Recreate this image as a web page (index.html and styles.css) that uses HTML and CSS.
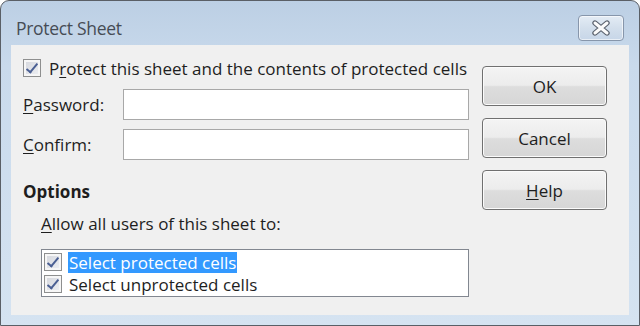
FILE: index.html
```html
<!DOCTYPE html>
<html lang="en">
<head>
  <meta charset="UTF-8">
  <title>Protect Sheet</title>
  <link rel="stylesheet" href="styles.css">
</head>
<body>

  <div class="window">
    <div class="titlebar">
      <span class="title">Protect Sheet</span>
      <button class="close-btn" aria-label="Close">
        <svg width="22" height="16" viewBox="0 0 22 16">
          <path d="M5 3 L17 13 M17 3 L5 13" stroke="#5d6470" stroke-width="5.4" stroke-linecap="round"/>
          <path d="M5 3 L17 13 M17 3 L5 13" stroke="#fbfbfb" stroke-width="3" stroke-linecap="round"/>
        </svg>
      </button>
    </div>

    <div class="client">
      <div class="main">
        <label class="check-row">
          <span class="checkbox checked"></span>
          <span>P<u>r</u>otect this sheet and the contents of protected cells</span>
        </label>

        <div class="field-row">
          <label for="password"><u>P</u>assword:</label>
          <input type="password" id="password">
        </div>
        <div class="field-row">
          <label for="confirm"><u>C</u>onfirm:</label>
          <input type="password" id="confirm">
        </div>

        <h3 class="options">Options</h3>
        <p class="allow"><u>A</u>llow all users of this sheet to:</p>

        <div class="listbox">
          <div class="list-item">
            <span class="checkbox checked"></span>
            <span class="item-text selected">Select protected cells</span>
          </div>
          <div class="list-item">
            <span class="checkbox checked"></span>
            <span class="item-text">Select unprotected cells</span>
          </div>
        </div>
      </div>

      <div class="buttons">
        <button class="dlg-btn">OK</button>
        <button class="dlg-btn">Cancel</button>
        <button class="dlg-btn"><u>H</u>elp</button>
      </div>
    </div>
  </div>

</body>
</html>
```

FILE: styles.css
```css
body {
  margin: 0;
  padding: 0;
  background: #ffffff;
  font-family: "Open Sans", "Noto Sans", sans-serif;
  font-size: 17px;
  color: #1e1e1e;
}
u {
  text-decoration-thickness: 1px;
  text-underline-offset: 2px;
}

.window {
  width: 640px;
  height: 326px;
  box-sizing: border-box;
  border: 1px solid #5a5f66;
  border-radius: 9px 9px 0 0;
  background: linear-gradient(180deg, #bccfe4 0%, #c9daec 20%, #d5e3f1 100%);
  display: flex;
  flex-direction: column;
  overflow: hidden;
}

.titlebar {
  height: 44px;
  display: flex;
  align-items: flex-start;
  justify-content: space-between;
  padding: 0 15px 0 15px;
}
.title {
  margin-top: 15px;
  font-family: "Open Sans", sans-serif;
  font-size: 17.5px;
  letter-spacing: -0.3px;
  color: #464c55;
}
.close-btn {
  margin-top: 14px;
  width: 46px;
  height: 26px;
  padding: 0;
  border: 1px solid #8796ab;
  border-radius: 4px;
  background: linear-gradient(180deg, #e4ecf5 0%, #d3dfec 50%, #c7d6e8 100%);
  box-shadow: inset 0 0 0 1px rgba(255,255,255,0.6);
  display: flex;
  align-items: center;
  justify-content: center;
}

.client {
  flex: 1;
  margin: 0 10px 10px 10px;
  background: #f0f0f0;
  display: flex;
  padding: 12px 0 0 12px;
}

.main {
  width: 446px;
  display: flex;
  flex-direction: column;
}

.checkbox {
  width: 18px;
  height: 18px;
  box-sizing: border-box;
  border: 1px solid #8e8f8f;
  background: linear-gradient(135deg, #d4d6dc 0%, #eef0f4 100%);
  box-shadow: inset 0 0 0 2px #f6f6f6;
  flex-shrink: 0;
  position: relative;
}
.checkbox.checked::after {
  content: "";
  position: absolute;
  left: 5px;
  top: 1px;
  width: 4px;
  height: 10px;
  border: solid #4a5f93;
  border-width: 0 2px 2px 0;
  transform: rotate(40deg);
}

.check-row {
  display: flex;
  align-items: center;
  gap: 8px;
  height: 22px;
}

.field-row {
  display: flex;
  align-items: center;
  margin-top: 10px;
  height: 31px;
}
.field-row + .field-row {
  margin-top: 9px;
}
.field-row label {
  width: 100px;
}
.field-row input {
  flex: 1;
  height: 31px;
  box-sizing: border-box;
  border: 1px solid #a8a8a8;
  background: #ffffff;
  margin: 0;
}

.options {
  margin: 22px 0 0 0;
  font-size: 17px;
  font-weight: bold;
  line-height: 20px;
}
.allow {
  margin: 12px 0 0 18px;
  line-height: 20px;
}

.listbox {
  margin: 15px 0 0 18px;
  height: 48px;
  box-sizing: border-box;
  border: 1px solid #828790;
  background: #ffffff;
  padding: 1px 0 0 2px;
}
.list-item {
  display: flex;
  align-items: center;
  gap: 6px;
  height: 22px;
}
.item-text {
  line-height: 21px;
  padding: 0 1px;
}
.item-text.selected {
  background: #3399ff;
  color: #ffffff;
}

.buttons {
  margin: 9px 0 0 13px;
  display: flex;
  flex-direction: column;
  gap: 12px;
}
.dlg-btn {
  width: 125px;
  height: 40px;
  border: 1px solid #707070;
  border-radius: 4px;
  background: linear-gradient(180deg, #f4f4f4 0%, #ececec 48%, #dddddd 52%, #d6d6d6 100%);
  box-shadow: inset 0 0 0 1px #fbfbfb;
  font-family: "Open Sans", "Noto Sans", sans-serif;
  font-size: 17px;
  color: #1e1e1e;
  padding: 0;
}
```
